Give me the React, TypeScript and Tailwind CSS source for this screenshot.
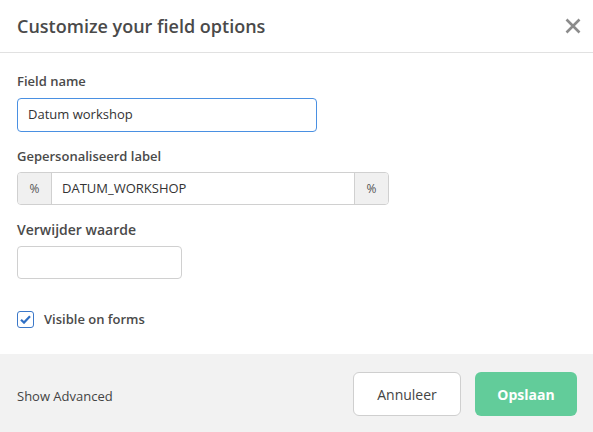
import React from 'react';

export default function App() {
  return (
    <div className="w-[593px] h-[432px] bg-white flex flex-col text-[#444]" style={{ fontFamily: '"Open Sans", sans-serif' }}>
      {/* Header */}
      <div className="h-[53px] flex items-center justify-between pl-[17px] pr-[12px] border-b border-[#e1e1e1] shrink-0">
        <h1 className="text-[18px] font-semibold text-[#4a4a4a] leading-none">Customize your field options</h1>
        <svg width="16" height="16" viewBox="0 0 16 16" className="text-[#8c8c8c]">
          <path d="M1.5 1.5 L14.5 14.5 M14.5 1.5 L1.5 14.5" stroke="currentColor" strokeWidth="2.6" strokeLinecap="butt" />
        </svg>
      </div>

      {/* Body */}
      <div className="flex-1 flex flex-col px-[17px] pt-[18px]">
        <label className="text-[13px] font-semibold text-[#4a4a4a] leading-[20px]">Field name</label>
        <div className="mt-[7px] w-[300px] h-[34px] rounded-[4px] border border-[#4a90e2] flex items-center px-[10px] text-[13px] text-[#333]">
          Datum workshop
        </div>

        <label className="mt-[14px] text-[13px] font-semibold text-[#4a4a4a] leading-[20px]">Gepersonaliseerd label</label>
        <div className="mt-[6px] w-[372px] h-[33px] rounded-[4px] border border-[#d0d0d0] flex text-[13px] overflow-hidden">
          <div className="w-[34px] bg-[#f0f0f0] border-r border-[#d0d0d0] flex items-center justify-center text-[#555] text-[12px]">%</div>
          <div className="flex-1 flex items-center px-[10px] text-[#333]">DATUM_WORKSHOP</div>
          <div className="w-[34px] bg-[#f0f0f0] border-l border-[#d0d0d0] flex items-center justify-center text-[#555] text-[12px]">%</div>
        </div>

        <label className="mt-[15px] text-[14px] font-semibold text-[#4a4a4a] leading-[20px]">Verwijder waarde</label>
        <div className="mt-[6px] w-[165px] h-[33px] rounded-[4px] border border-[#d0d0d0]" />

        <div className="mt-[31px] flex items-center gap-[10px]">
          <div className="w-[17px] h-[17px] rounded-[3px] border border-[#3b78c9] flex items-center justify-center">
            <svg width="11" height="9" viewBox="0 0 11 9">
              <path d="M1 4.8 L4 7.6 L10 1.2" fill="none" stroke="#2f6fc4" strokeWidth="2.2" />
            </svg>
          </div>
          <span className="text-[13px] font-semibold text-[#4a4a4a]">Visible on forms</span>
        </div>
      </div>

      {/* Footer */}
      <div className="h-[78px] bg-[#f2f2f2] flex items-center justify-between pl-[17px] pr-[16px] pt-[2px] shrink-0">
        <span className="text-[13px] text-[#444] mt-[6px]">Show Advanced</span>
        <div className="flex items-center gap-[14px]">
          <button className="w-[108px] h-[44px] bg-white border border-[#cfcfcf] rounded-[6px] text-[14px] text-[#444] font-medium">Annuleer</button>
          <button className="w-[102px] h-[44px] bg-[#62cc9a] rounded-[6px] text-[14px] text-white font-bold">Opslaan</button>
        </div>
      </div>
    </div>
  );
}
